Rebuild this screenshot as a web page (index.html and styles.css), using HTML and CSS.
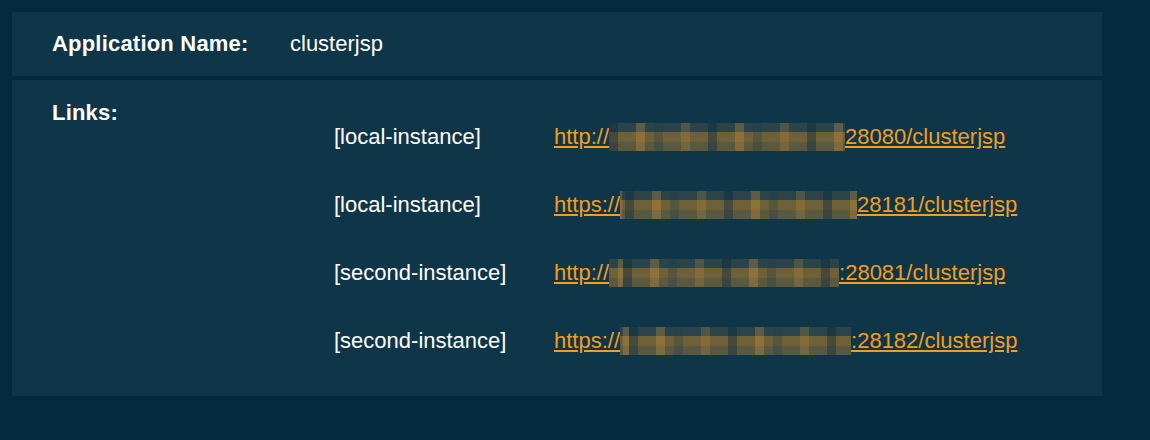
FILE: index.html
```html
<!DOCTYPE html>
<html lang="en">
<head>
    <meta charset="UTF-8">
    <title>Application</title>
    <link rel="stylesheet" href="styles.css">
</head>
<body>
<div class="page">
    <div class="panel panel-name">
        <div class="label">Application Name:</div>
        <div class="value">clusterjsp</div>
    </div>
    <div class="panel panel-links">
        <div class="label links-label">Links:</div>
        <div class="links">
            <div class="row">
                <div class="inst">[local-instance]</div>
                <a href="#" class="url">http://<span class="mask m1"></span>28080/clusterjsp</a>
            </div>
            <div class="row">
                <div class="inst">[local-instance]</div>
                <a href="#" class="url">https://<span class="mask m2"></span>28181/clusterjsp</a>
            </div>
            <div class="row">
                <div class="inst">[second-instance]</div>
                <a href="#" class="url">http://<span class="mask m3"></span>:28081/clusterjsp</a>
            </div>
            <div class="row">
                <div class="inst">[second-instance]</div>
                <a href="#" class="url">https://<span class="mask m4"></span>:28182/clusterjsp</a>
            </div>
        </div>
    </div>
</div>
</body>
</html>
```

FILE: styles.css
```css
*{margin: 0;padding: 0;box-sizing: border-box;}

body{
    background: #032a3e;
    font-family: "Liberation Sans", Arial, Helvetica, sans-serif;
    font-size: 22px;
    color: #fff;
}
.page{
    padding: 12px;
    width: 1114px;
}
.panel{
    background: #0e3548;
    display: flex;
    padding: 0 40px;
}
.panel-name{
    height: 64px;
    align-items: center;
    margin-bottom: 4px;
}
.label{
    font-weight: bold;
    width: 238px;
    letter-spacing: .2px;
}
.panel-links{
    padding-top: 20px;
    padding-bottom: 21px;
}
.links-label{
    width: 282px;
}
.links{
    margin-top: 3px;
}
.links .row{
    height: 68px;
    display: flex;
    align-items: center;
}
.links .inst{
    width: 220px;
}
.url{
    color: #f29d1f;
    text-decoration: underline;
    white-space: nowrap;
}
/* pixelated host name */
.mask{
    display: inline-block;
    height: 28px;
    vertical-align: -7px;
    background:
        repeating-linear-gradient(90deg, rgba(5,40,62,.4) 0 9px, transparent 9px 27px, rgba(210,150,60,.3) 27px 36px, transparent 36px 45px, rgba(30,60,70,.3) 45px 54px, transparent 54px 72px, rgba(190,140,60,.25) 72px 81px, transparent 81px 99px),
        linear-gradient(180deg, #2a4449 0 9px, #6f6137 9px 19px, #5b5840 19px 28px);
}
.m1{width: 236px;}
.m2{width: 237px;background-position: 5px 0;}
.m3{width: 230px;background-position: 14px 0;}
.m4{width: 231px;background-position: 9px 0;}
```
